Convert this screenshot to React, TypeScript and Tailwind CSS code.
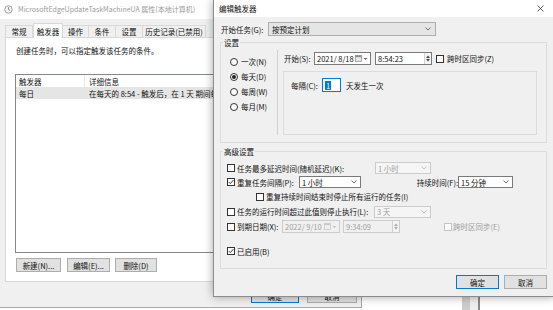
import React from "react";

const Chevron = ({ disabled }: { disabled?: boolean }) => (
  <svg width="6" height="4" viewBox="0 0 6 4" className="shrink-0">
    <path d="M0.5 0.5 L3 3 L5.5 0.5" fill="none" stroke={disabled ? "#b5b5b5" : "#555"} strokeWidth="0.8" />
  </svg>
);

const Check = () => (
  <svg width="6" height="6" viewBox="0 0 6 6">
    <path d="M0.8 3.1 L2.3 4.6 L5.3 1.2" fill="none" stroke="#222" strokeWidth="0.9" />
  </svg>
);

const CheckBox = ({ checked, disabled }: { checked?: boolean; disabled?: boolean }) => (
  <span
    className={`w-[8px] h-[8px] shrink-0 border bg-white flex items-center justify-center ${
      disabled ? "border-[#c4c4c4]" : "border-[#333]"
    }`}
  >
    {checked && <Check />}
  </span>
);

const Radio = ({ checked }: { checked?: boolean }) => (
  <span className="w-[8px] h-[8px] shrink-0 rounded-full border border-[#333] bg-white flex items-center justify-center">
    {checked && <span className="w-[4px] h-[4px] rounded-full bg-[#222]" />}
  </span>
);

const Select = ({ value, disabled, className }: { value: string; disabled?: boolean; className: string }) => (
  <div
    className={`h-[12px] border flex items-center justify-between pl-[2px] pr-[3px] ${
      disabled ? "border-[#cccccc] bg-[#f5f5f5] text-[#a0a0a0]" : "border-[#7a7a7a] bg-white"
    } ${className}`}
  >
    <span>{value}</span>
    <Chevron disabled={disabled} />
  </div>
);

const DateBox = ({ value, disabled, className }: { value: string; disabled?: boolean; className: string }) => (
  <div
    className={`h-[13px] border flex items-center pl-[2px] pr-[2px] ${
      disabled ? "border-[#cccccc] text-[#a0a0a0]" : "border-[#7a7a7a] bg-white"
    } ${className}`}
  >
    <span className="flex-1">{value}</span>
    <svg width="7" height="7" viewBox="0 0 7 7" className="shrink-0">
      <rect x="0.5" y="0.5" width="6" height="6" fill={disabled ? "#eee" : "#e8e8e8"} stroke={disabled ? "#c8c8c8" : "#888"} strokeWidth="0.7" />
      <rect x="0.5" y="0.5" width="6" height="1.6" fill={disabled ? "#c8c8c8" : "#888"} />
    </svg>
    <svg width="5" height="4" viewBox="0 0 5 4" className="ml-[1px] shrink-0">
      <path d="M0.5 1 L2.5 3 L4.5 1 Z" fill={disabled ? "#c0c0c0" : "#666"} />
    </svg>
  </div>
);

const TimeBox = ({ value, disabled, className }: { value: string; disabled?: boolean; className: string }) => (
  <div
    className={`h-[13px] border flex items-center pl-[2px] ${
      disabled ? "border-[#cccccc] text-[#a0a0a0]" : "border-[#7a7a7a] bg-white"
    } ${className}`}
  >
    <span className="flex-1">{value}</span>
    <div className="w-[7px] h-full border-l border-[#d0d0d0] bg-[#f3f3f3] flex flex-col items-center justify-center gap-[1px]">
      <svg width="4" height="3" viewBox="0 0 4 3">
        <path d="M0 3 L2 0.5 L4 3 Z" fill={disabled ? "#aaa" : "#444"} />
      </svg>
      <svg width="4" height="3" viewBox="0 0 4 3">
        <path d="M0 0 L2 2.5 L4 0 Z" fill={disabled ? "#aaa" : "#444"} />
      </svg>
    </div>
  </div>
);

const Button = ({ label, primary, className }: { label: string; primary?: boolean; className: string }) => (
  <div
    className={`h-[14px] flex items-center justify-center bg-[#e1e1e1] border ${
      primary ? "border-[#0078d7]" : "border-[#adadad]"
    } ${className}`}
  >
    {label}
  </div>
);

const tabs = [
  { label: "常规", w: "w-[28px]" },
  { label: "触发器", w: "w-[30px]", active: true },
  { label: "操作", w: "w-[26px]" },
  { label: "条件", w: "w-[27px]" },
  { label: "设置", w: "w-[27px]" },
  { label: "历史记录(已禁用)", w: "w-[63px]" },
];

const PropertiesWindow = () => (
  <div className="absolute left-0 top-0 w-[362px] h-[308px] bg-[#f0f0f0] border-r border-b border-[#a8a8a8] flex flex-col">
    <div className="h-[19px] bg-white flex items-center pl-[4px] text-[#9a9a9a]">
      <svg width="9" height="9" viewBox="0 0 10 10" className="shrink-0">
        <circle cx="5" cy="5" r="4.2" fill="#f4f4f4" stroke="#8a8a8a" strokeWidth="0.9" />
        <path d="M5 2.4 V5 L6.8 6.2" fill="none" stroke="#777" strokeWidth="0.9" />
      </svg>
      <span className="ml-[5px] text-[7px] whitespace-nowrap">MicrosoftEdgeUpdateTaskMachineUA 属性(本地计算机)</span>
    </div>

    <div className="h-[18px] flex items-end pl-[5px]">
      {tabs.map(t =>
        t.active ? (
          <div
            key={t.label}
            className={`${t.w} h-[15px] -mb-px relative z-10 bg-white border-x border-t border-[#d9d9d9] flex items-center justify-center`}
          >
            {t.label}
          </div>
        ) : (
          <div
            key={t.label}
            className={`${t.w} h-[12px] bg-[#f0f0f0] border-r border-t border-[#d9d9d9] first:border-l flex items-center justify-center`}
          >
            {t.label}
          </div>
        )
      )}
    </div>

    <div className="ml-[5px] w-[351px] h-[245px] bg-white border border-[#d9d9d9] pl-[9px] flex flex-col">
      <div className="mt-[8px] ml-[1px] h-[9px] leading-[9px]">创建任务时，可以指定触发该任务的条件。</div>
      <div className="mt-[19px] w-[330px] h-[179px] border border-[#828790] bg-white flex flex-col">
        <div className="h-[12px] flex items-center">
          <div className="w-[69px] h-full pl-[3px] flex items-center border-r border-[#e5e5e5]">触发器</div>
          <div className="pl-[4px]">详细信息</div>
        </div>
        <div className="h-[12px] flex items-center bg-[#e5e5e5]">
          <div className="w-[69px] pl-[3px]">每日</div>
          <div className="pl-[4px] w-[128px] overflow-hidden whitespace-nowrap">在每天的 8:54 - 触发后，在 1 天 期间每隔 1 小时 重复一次。</div>
        </div>
      </div>
      <div className="mt-[5px] flex">
        <Button label="新建(N)..." className="ml-[1px] w-[45px]" />
        <Button label="编辑(E)..." className="ml-[6px] w-[43px]" />
        <Button label="删除(D)" className="ml-[5px] w-[42px]" />
      </div>
    </div>

    <div className="mt-[7px] flex justify-end gap-[8px] pr-[4px]">
      <Button label="确定" primary className="w-[48px]" />
      <Button label="取消" className="w-[50px]" />
    </div>
  </div>
);

const EditTriggerDialog = () => (
  <div className="absolute left-[213px] top-0 w-[342px] h-[297px] bg-[#f0f0f0] border-l border-b border-[#8c8c8c] shadow-[0_0_9px_rgba(0,0,0,0.35)] z-20 flex flex-col">
    <div className="h-[17px] bg-white flex items-center justify-between pl-[5px] pr-[11px]">
      <span>编辑触发器</span>
      <svg width="7" height="7" viewBox="0 0 7 7">
        <path d="M0.5 0.5 L6.5 6.5 M6.5 0.5 L0.5 6.5" stroke="#333" strokeWidth="0.8" />
      </svg>
    </div>

    <div className="px-[6px] flex flex-col">
      <div className="mt-[5px] h-[14px] flex items-center">
        <span className="w-[48px] pl-[1px]">开始任务(G):</span>
        <div className="w-[168px] h-[14px] bg-[#e5e5e5] border border-[#adadad] flex items-center justify-between pl-[3px] pr-[4px]">
          <span>按预定计划</span>
          <Chevron />
        </div>
      </div>

      <fieldset className="mt-[2px] h-[105px] w-[327px] border border-[#dcdcdc]">
        <legend className="ml-[2px] px-[1px] leading-[9px]">设置</legend>
        <div className="flex h-full">
          <div className="w-[56px] pl-[9px] pt-[7px] flex flex-col">
            {[
              ["一次(N)", false],
              ["每天(D)", true],
              ["每周(W)", false],
              ["每月(M)", false],
            ].map(([label, on]) => (
              <div key={label as string} className="h-[15px] flex items-center">
                <Radio checked={on as boolean} />
                <span className="ml-[3px] whitespace-nowrap">{label}</span>
              </div>
            ))}
          </div>
          <div className="w-px mt-[3px] h-[85px] bg-[#d0d0d0]" />
          <div className="flex-1 pl-[5px] pt-[5px] flex flex-col">
            <div className="h-[13px] flex items-center ml-[1px]">
              <span className="w-[30px]">开始(S):</span>
              <DateBox value="2021/ 8/18" className="w-[57px]" />
              <TimeBox value="8:54:23" className="ml-[4px] w-[57px]" />
              <span className="ml-[4px]">
                <CheckBox />
              </span>
              <span className="ml-[3px]">跨时区同步(Z)</span>
            </div>
            <div className="mt-[6px] w-[254px] h-[64px] border border-[#dcdcdc] pl-[7px] pt-[6px]">
              <div className="h-[14px] flex items-center">
                <span className="w-[31px]">每隔(C):</span>
                <div className="w-[19px] h-[14px] border border-[#0078d7] bg-white flex items-center pl-[2px]">
                  <span className="bg-[#0078d7] text-white px-[1px] leading-[9px]">1</span>
                </div>
                <span className="ml-[5px]">天发生一次</span>
              </div>
            </div>
          </div>
        </div>
      </fieldset>

      <fieldset className="mt-[4px] h-[122px] w-[327px] border border-[#dcdcdc]">
        <legend className="ml-[2px] px-[1px] leading-[9px]">高级设置</legend>
        <div className="pl-[6px] pt-[5px] flex flex-col">
          <div className="h-[14px] flex items-center">
            <CheckBox />
            <span className="ml-[2px] w-[138px]">任务最多延迟时间(随机延迟)(K):</span>
            <Select value="1 小时" disabled className="w-[56px]" />
          </div>
          <div className="h-[14px] flex items-center">
            <CheckBox checked />
            <span className="ml-[2px] w-[62px]">重复任务间隔(P):</span>
            <Select value="1 小时" className="w-[62px]" />
            <span className="w-[97px] text-right">持续时间(F):</span>
            <Select value="15 分钟" className="w-[55px]" />
          </div>
          <div className="h-[15px] flex items-center pl-[29px]">
            <CheckBox />
            <span className="ml-[2px]">重复持续时间结束时停止所有运行的任务(I)</span>
          </div>
          <div className="h-[15px] flex items-center">
            <CheckBox />
            <span className="ml-[2px] w-[137px]">任务的运行时间超过此值则停止执行(L):</span>
            <Select value="3 天" disabled className="w-[57px]" />
          </div>
          <div className="h-[15px] flex items-center">
            <CheckBox />
            <span className="ml-[2px] w-[45px]">到期日期(X):</span>
            <DateBox value="2022/ 9/10" disabled className="w-[58px]" />
            <TimeBox value="9:34:09" disabled className="ml-[3px] w-[57px]" />
            <span className="ml-[44px]">
              <CheckBox disabled />
            </span>
            <span className="ml-[1px] text-[#a0a0a0]">跨时区同步(E)</span>
          </div>
          <div className="mt-[10px] h-[14px] flex items-center">
            <CheckBox checked />
            <span className="ml-[2px]">已启用(B)</span>
          </div>
        </div>
      </fieldset>

      <div className="mt-[6px] flex justify-end gap-[5px] pr-[2px]">
        <Button label="确定" primary className="w-[43px] h-[13px]" />
        <Button label="取消" className="w-[43px] h-[13px]" />
      </div>
    </div>
  </div>
);

export default function App() {
  return (
    <div className="relative w-[553px] h-[310px] overflow-hidden bg-white text-[7.5px] leading-[9px] text-[#111] font-['Noto_Sans_CJK_SC','Noto_Sans',sans-serif]">
      <PropertiesWindow />
      <div className="absolute left-[462px] top-[288px] w-[18px] h-[22px] flex">
        <div className="w-[8px] h-full bg-[#cdcdcd]" />
        <div className="w-[8px] h-full bg-[#efefef]" />
        <div className="w-[2px] h-full bg-[#8a8a8a]" />
      </div>
      <EditTriggerDialog />
    </div>
  );
}
